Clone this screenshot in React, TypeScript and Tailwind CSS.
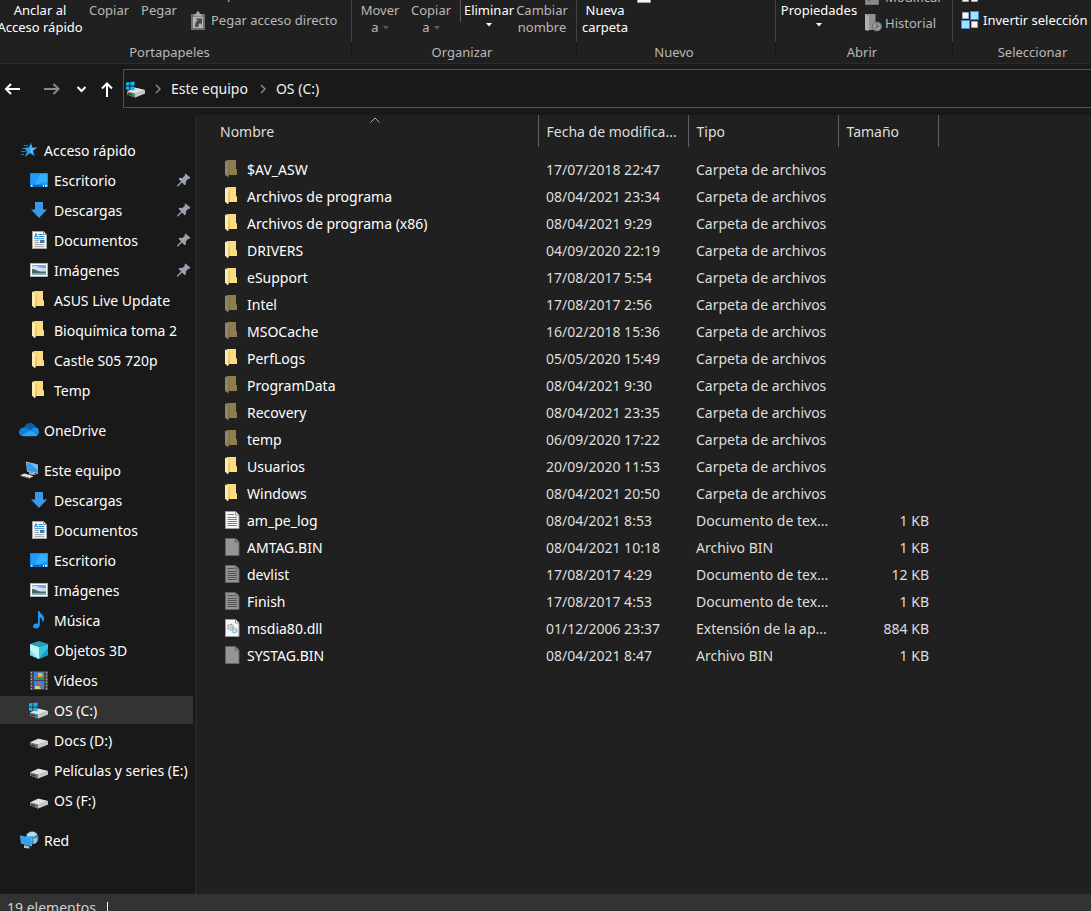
import type { ReactNode } from "react"
import clsx from "clsx"

/* ---------- icons ---------- */

function DriveShape() {
  return (
    <>
      <path d="M0 12.5 8 8.5 18 11v3.5L8 18.5 0 15.6z" fill="#8d8d8f" />
      <path d="M0 12.5 8.5 8.7 18 11 8 14.6z" fill="#e4e4e8" />
      <path d="M8 14.6 18 11v3.5L8 18.5z" fill="#c6c6ca" />
      <path d="M0 12.5 8 14.6v3.9L0 15.6z" fill="#77777a" />
      <path d="M1 14l5.5 1.5v1.8L1 15.4z" fill="#3b3b3d" />
      <path d="M5 15.3h2v1.5H5z" fill="#23b14d" />
    </>
  )
}

function DriveIcon() {
  return (
    <svg width="18" height="20" viewBox="0 0 18 20">
      <DriveShape />
    </svg>
  )
}

function SystemDriveIcon() {
  return (
    <svg width="20" height="20" viewBox="-1 0 20 20">
      <DriveShape />
      <path d="M-1 3.4 2.3 3v3.5H-1zM3.2 2.9 7.5 2.4v4.1H3.2zM-1 7.4h3.3v3.5l-3.3-.4zM3.2 7.4h4.3v4l-4.3-.5z" fill="#12b5ee" />
    </svg>
  )
}

function FolderIcon({ dim }: { dim?: boolean }) {
  return (
    <svg width="14" height="18" viewBox="0 0 14 18" className={clsx(dim && "opacity-50")}>
      <path d="M1.5 0H10.4q.6 0 .6.6V9.5h1V15H3z" fill="#f7d675" />
      <path d="M5 0h5.4q.6 0 .6.6V9.5h1V15H5z" fill="#fbdc7e" />
      <path d="M0 .4 3.8 2.6V15L3 17.2 0 14.8z" fill="#ffeab0" />
      <path d="M3.8 2.6 4.4 3.4V14l-1.4 3.2.2-2.5z" fill="#d9b45a" />
    </svg>
  )
}

type SheetKind = "text" | "blank" | "dll"

function SheetIcon({ kind, dim }: { kind: SheetKind; dim?: boolean }) {
  return (
    <svg width="15" height="18" viewBox="0 0 15 18" className={clsx(dim && "opacity-55")}>
      <path d="M.5.5h10l3.500 3.500v13.500H.5z" fill="#f6f6f6" stroke="#9a9a9a" />
      <path d="M10.500.5v3.500h3.500" fill="#fff" stroke="#8a8a8a" />
      {kind === "text" && (
        <path d="M2.500 3.500h6.500M2.500 6.500h9.500M2.500 8.500h9.500M2.500 10.500h9.500M2.500 12.500h9.500M2.500 14.500h9.500" stroke="#7d7d7d" />
      )}
      {kind === "dll" && (
        <>
          <circle cx="5.500" cy="8" r="2.600" fill="none" stroke="#7f8c95" strokeWidth="1.400" strokeDasharray="1.200 .6" />
          <circle cx="5.500" cy="8" r="1" fill="#9aa6ae" />
          <circle cx="9.500" cy="11.500" r="2.200" fill="#cfe5f4" stroke="#6ba3c9" strokeWidth="1.300" strokeDasharray="1.200 .6" />
        </>
      )}
    </svg>
  )
}

function StarIcon() {
  return (
    <svg width="18" height="16" viewBox="0 0 18 16">
      <path d="M11 .5 12.300 5.300l5.200.2-4.500 3.300 1.700 5.400-4.700-2.900-5.300 3.700 2.400-5.500L4 5.900l4.900-.6z" fill="#2b9fee" />
      <path d="M11 2.500 11.800 6.200l3.500.2-2.900 2.300.9 3.400-3-2z" fill="#5cc0ff" />
      <path d="M4 3.500h4M2 6.500h3M1 9.500h5M1 12.500h3" stroke="#1d7fd0" strokeWidth="1" />
    </svg>
  )
}

function DesktopIcon() {
  return (
    <svg width="18" height="14" viewBox="0 0 18 14">
      <path d="M0 0h18v14H0z" fill="#1183dc" />
      <path d="M.8.8h16.400v11H.8z" fill="#1a9cff" />
      <path d="M10 .8h7.200v7.500L5 11.800z" fill="#35adff" />
      <path d="M1 12h16v1.400H1z" fill="#0a5ea8" />
      <path d="M1 12h1.500v1.400H1zM13 12h1v1.400h-1zM15 12h2v1.400h-2z" fill="#fff" />
    </svg>
  )
}

function DownloadIcon() {
  return (
    <svg width="16" height="16" viewBox="0 0 16 16">
      <path d="M4 0h8v7.500h4L8 16 0 7.500h4z" fill="#3c97ea" />
    </svg>
  )
}

function DocumentIcon() {
  return (
    <svg width="15" height="18" viewBox="0 0 15 18">
      <path d="M.5.5h11l3 3v14H.5z" fill="#fafafa" stroke="#a5a5a5" />
      <path d="M11.500.5v3h3" fill="#ddd" stroke="#8a8a8a" />
      <path d="M2.500 6.500 4 2.500 5.500 6.500M3 5.200h2" stroke="#1f8bd6" fill="none" />
      <path d="M6.500 3.500h4M6.500 5.500h6M2.500 7.700h10" stroke="#1f8bd6" />
      <path d="M2.500 9.700h4.500M2.500 11.700h4.500M2.500 13.700h10M2.500 15.700h10" stroke="#9a9a9a" />
      <path d="M8 9h4.500v3H8z" fill="#3f79ad" />
    </svg>
  )
}

function PicturesIcon() {
  return (
    <svg width="18" height="14" viewBox="0 0 18 14">
      <path d="M.5.5h17v13H.5z" fill="#fff" stroke="#b4b4b4" />
      <path d="M2 2h14v10H2z" fill="#6fa8e8" />
      <path d="M2 3.500q3-1.500 6 .3 4 1.400 8 1.700V8H2z" fill="#cfe3f7" />
      <path d="M2 6q3 0 5.500 1.700T16 9.200v1.300H2z" fill="#3b6b52" />
      <path d="M2 10h14v2H2z" fill="#7ea7c2" />
    </svg>
  )
}

function MusicIcon() {
  return (
    <svg width="12" height="18" viewBox="0 0 12 18">
      <path d="M5 0h1.500c.4 2.600 4.600 4 4.600 7.600 0 1.600-.7 3-1.800 4.200.6-3-.6-4.700-2.500-5.300V14c0 2-1.700 3.400-3.800 3.400C1.200 17.400 0 16.500 0 15.200c0-1.900 2.300-3.200 5-2.600z" fill="#1a9cff" />
    </svg>
  )
}

function CubeIcon() {
  return (
    <svg width="18" height="18" viewBox="0 0 18 18">
      <path d="M9 0 18 3 9 6 0 3z" fill="#1fa3b5" />
      <path d="M0 3 9 6v12L0 14z" fill="#c0f4f7" />
      <path d="M0 9 9 18 0 14z" fill="#74dfe8" />
      <path d="M9 6 18 3v11L9 18z" fill="#35c3dc" />
      <path d="M9 18 18 7v7z" fill="#179cc6" />
    </svg>
  )
}

function VideoIcon() {
  return (
    <svg width="18" height="19" viewBox="0 0 18 19">
      <path d="M0 0h18v19H0z" fill="#454545" />
      <path d="M4 1h10v8H4zM4 10h10v8H4z" fill="#3f7fe0" />
      <path d="M1.500 1v18M16.500 1v18" stroke="#b0b0b0" strokeWidth="1.200" strokeDasharray="1.500 1.700" />
      <path d="M8 2h4l1 2-2 2H8z" fill="#f0b53a" />
      <path d="M5 5h3v2H5zM8 12h4v3H8z" fill="#d95140" />
      <path d="M7 7h6v2H7z" fill="#2b9348" />
      <path d="M5 15h4l2 3H5z" fill="#f1c94e" />
    </svg>
  )
}

function CloudIcon() {
  return (
    <svg width="20" height="14" viewBox="0 0 20 14">
      <path d="M5 5.200C5.800 2 8.200 0 11 0c2.700 0 4.900 1.700 5.700 4.300L11.500 8z" fill="#0a5fb4" />
      <path d="M4.500 4.600c1.500-.2 3 .2 4.200 1L13 8.500 2 12.600C.7 11.900 0 10.700 0 9.300 0 6.800 2 4.800 4.500 4.600z" fill="#1380d8" />
      <path d="M12 7.200c1-1.800 2.700-3 4.600-2.900C18.700 4.500 20 6.400 20 8.700c0 1-.3 2-.9 2.800z" fill="#1490df" />
      <path d="M2 12.600 12 7.300l7.100 4.200C18.500 12.500 17.500 13.200 16 13.200H4.500c-.9 0-1.800-.2-2.500-.6z" fill="#2aa5ec" />
    </svg>
  )
}

function ComputerIcon() {
  return (
    <svg width="19" height="18" viewBox="0 0 19 18">
      <path d="M6 .5 18 3.500v9.500L7 10.500z" fill="#b9c6cf" />
      <path d="M7 1.500 17.600 4v8L7.500 9.900z" fill="#2d9fee" />
      <path d="M10 2.200 17.600 4v5z" fill="#69c1fa" />
      <path d="M9 10.900l5 1.100 2 2-7-.5z" fill="#aab1b7" />
      <path d="M0 14.300 4.500 12.500l9 2.700-3.500 1.900z" fill="#e3e3e5" />
      <path d="M0 14.300 10 17.100v.7L0 15z" fill="#8a8a8d" />
    </svg>
  )
}

function NetworkIcon() {
  return (
    <svg width="19" height="18" viewBox="0 0 19 18">
      <circle cx="12" cy="6.800" r="6.500" fill="#3f8fb8" />
      <path d="M7 3.500Q12-1.500 17 3q-2 3-5 2.500T8 6z" fill="#b5ddec" />
      <path d="M13 8q3-2 5 0-1 4-4 5z" fill="#8cc5dc" />
      <path d="M0 4.500 12 7v8.500L1 12.500z" fill="#5bb6ef" />
      <path d="M.8 5.400 11.500 7.600v7L1.500 12z" fill="#2ea3f2" />
      <path d="M4 14l5 1.300 1 2.200-6-.6z" fill="#b9c0c5" />
    </svg>
  )
}

function PinIcon() {
  return (
    <svg width="14" height="14" viewBox="0 0 14 14" className="ml-auto shrink-0">
      <path d="M8.500.5 13.500 4.800l-1 1-1.200-.1-2.500 2.800.2 2.600-1.300 1.200L5 9.600 1 13.500H0l.3-1.200L4 8.600 1.500 5.800l1.200-1 2.700.2L8 2.400 7.600 1.300z" fill="#9aa3ad" />
    </svg>
  )
}

function PasteShortcutIcon() {
  return (
    <svg width="14" height="19" viewBox="0 0 14 19">
      <path d="M0 3h14v16H0z" fill="#6f6f6f" />
      <path d="M3 3h2l1-2.500h2L9 3h2v2.500H3z" fill="#a5a5a5" />
      <path d="M2 6h10v11H2z" fill="#b5b5b5" />
      <path d="M4.500 7.500H11V14L9 12q-2 1.500-1.500 4H4q-.5-4.500 2.500-6.500z" fill="#4a4a4a" />
    </svg>
  )
}

function HistoryIcon() {
  return (
    <svg width="17" height="18" viewBox="0 0 17 18">
      <path d="M0 0h10.500v8H12v8H0z" fill="#8f8f8f" />
      <path d="M0 0l4 2v14l-1 1-3-1z" fill="#adadad" />
      <circle cx="12" cy="12.500" r="4.500" fill="#9d9d9d" stroke="#686868" />
      <path d="M12 9v4l-2 1.500M12 13l2.200-1" stroke="#565656" fill="none" />
    </svg>
  )
}

function EditIcon() {
  return (
    <svg width="14" height="16" viewBox="0 0 14 16">
      <path d="M.5.5h13v15H.5z" fill="#8a8a8a" stroke="#777" />
      <path d="M3 13 4 10l7-8 1.500 1.500-7 8z" fill="#5c5c5c" />
    </svg>
  )
}

function SelectionIcon({ inverted }: { inverted?: boolean }) {
  return (
    <svg width="18" height="18" viewBox="0 0 18 18">
      <path d="M1.500 1.500h6v6h-6zM10.500 10.500h6v6h-6z" fill="#f5f5f5" stroke="#a9a9a9" />
      <path
        d={inverted ? "M9.500.5h8v8h-8zM.5 9.500h8v8h-8z" : "M10.500 1.500h6v6h-6zM1.500 10.500h6v6h-6z"}
        fill={inverted ? "#a9dcfb" : "#f5f5f5"}
        stroke={inverted ? "#2a90dc" : "#a9a9a9"}
      />
    </svg>
  )
}

function Arrow({ d, className }: { d: string; className?: string }) {
  return (
    <svg width="18" height="16" viewBox="0 0 18 16" fill="none" stroke="currentColor" strokeWidth="2" className={className}>
      <path d={d} />
    </svg>
  )
}

function Crumb() {
  return (
    <svg width="6" height="10" viewBox="0 0 6 10" fill="none" stroke="#8a8a8a" strokeWidth="1.500">
      <path d="M1 1l4 4-4 4" />
    </svg>
  )
}

function Caret() {
  return (
    <svg width="6" height="4" viewBox="0 0 6 4" className="inline-block">
      <path d="M0 0h6L3 3.500z" fill="currentColor" />
    </svg>
  )
}

/* ---------- data ---------- */

type NavItem = {
  label: string
  icon: ReactNode
  pinned?: boolean
  active?: boolean
}

type NavGroup = NavItem & { items: NavItem[] }

const navGroups: NavGroup[] = [
  {
    label: "Acceso rápido",
    icon: <StarIcon />,
    items: [
      { label: "Escritorio", icon: <DesktopIcon />, pinned: true },
      { label: "Descargas", icon: <DownloadIcon />, pinned: true },
      { label: "Documentos", icon: <DocumentIcon />, pinned: true },
      { label: "Imágenes", icon: <PicturesIcon />, pinned: true },
      { label: "ASUS Live Update", icon: <FolderIcon /> },
      { label: "Bioquímica toma 2", icon: <FolderIcon /> },
      { label: "Castle S05 720p", icon: <FolderIcon /> },
      { label: "Temp", icon: <FolderIcon /> },
    ],
  },
  { label: "OneDrive", icon: <CloudIcon />, items: [] },
  {
    label: "Este equipo",
    icon: <ComputerIcon />,
    items: [
      { label: "Descargas", icon: <DownloadIcon /> },
      { label: "Documentos", icon: <DocumentIcon /> },
      { label: "Escritorio", icon: <DesktopIcon /> },
      { label: "Imágenes", icon: <PicturesIcon /> },
      { label: "Música", icon: <MusicIcon /> },
      { label: "Objetos 3D", icon: <CubeIcon /> },
      { label: "Vídeos", icon: <VideoIcon /> },
      { label: "OS (C:)", icon: <SystemDriveIcon />, active: true },
      { label: "Docs (D:)", icon: <DriveIcon /> },
      { label: "Películas y series (E:)", icon: <DriveIcon /> },
      { label: "OS (F:)", icon: <DriveIcon /> },
    ],
  },
  { label: "Red", icon: <NetworkIcon />, items: [] },
]

type Entry = {
  name: string
  date: string
  type?: string
  size?: string
  sheet?: SheetKind
  hidden?: boolean
}

const entries: Entry[] = [
  { name: "$AV_ASW", date: "17/07/2018 22:47", hidden: true },
  { name: "Archivos de programa", date: "08/04/2021 23:34" },
  { name: "Archivos de programa (x86)", date: "08/04/2021 9:29" },
  { name: "DRIVERS", date: "04/09/2020 22:19" },
  { name: "eSupport", date: "17/08/2017 5:54" },
  { name: "Intel", date: "17/08/2017 2:56", hidden: true },
  { name: "MSOCache", date: "16/02/2018 15:36", hidden: true },
  { name: "PerfLogs", date: "05/05/2020 15:49" },
  { name: "ProgramData", date: "08/04/2021 9:30", hidden: true },
  { name: "Recovery", date: "08/04/2021 23:35", hidden: true },
  { name: "temp", date: "06/09/2020 17:22", hidden: true },
  { name: "Usuarios", date: "20/09/2020 11:53" },
  { name: "Windows", date: "08/04/2021 20:50" },
  { name: "am_pe_log", date: "08/04/2021 8:53", type: "Documento de tex...", size: "1 KB", sheet: "text" },
  { name: "AMTAG.BIN", date: "08/04/2021 10:18", type: "Archivo BIN", size: "1 KB", sheet: "blank", hidden: true },
  { name: "devlist", date: "17/08/2017 4:29", type: "Documento de tex...", size: "12 KB", sheet: "text", hidden: true },
  { name: "Finish", date: "17/08/2017 4:53", type: "Documento de tex...", size: "1 KB", sheet: "text", hidden: true },
  { name: "msdia80.dll", date: "01/12/2006 23:37", type: "Extensión de la ap...", size: "884 KB", sheet: "dll" },
  { name: "SYSTAG.BIN", date: "08/04/2021 8:47", type: "Archivo BIN", size: "1 KB", sheet: "blank", hidden: true },
]

/* ---------- ribbon ---------- */

function RibbonGroup({ label, className, children }: { label: string; className: string; children: ReactNode }) {
  return (
    <section className={clsx("flex shrink-0 flex-col", className)}>
      <div className="flex h-[42px] items-start border-r border-[#424242]">{children}</div>
      <h2 className="h-[18px] border-r border-[#171717] pr-1 text-center leading-5 text-[#b8b8b8]">{label}</h2>
    </section>
  )
}

function BigButton({ className, children }: { className: string; children: ReactNode }) {
  return (
    <button className={clsx("mt-0.5 flex shrink-0 flex-col items-center leading-[17px] whitespace-nowrap", className)}>
      {children}
    </button>
  )
}

function SmallButton({ icon, label, className }: { icon: ReactNode; label: string; className?: string }) {
  return (
    <button className={clsx("flex h-[26px] shrink-0 items-center whitespace-nowrap", className)}>
      {icon}
      {label}
    </button>
  )
}

function Ribbon() {
  return (
    <header className="flex h-16 shrink-0 overflow-hidden border-b border-[#2b2b2b] bg-[#202020] text-[13px]">
      <RibbonGroup label="Portapapeles" className="-ml-2 w-[360px]">
        <BigButton className="ml-1 w-[88px] text-white">
          <span>Anclar al</span>
          <span>Acceso rápido</span>
        </BigButton>
        <BigButton className="w-[50px] text-[#b8b8b8]">Copiar</BigButton>
        <BigButton className="w-[50px] text-[#b8b8b8]">Pegar</BigButton>
        <div className="ml-[7px] flex h-[33px] flex-col justify-end overflow-hidden text-[#b8b8b8]">
          <SmallButton icon={<span className="w-3.5" />} label="Copiar ruta de acceso" className="gap-1.5" />
          <SmallButton icon={<PasteShortcutIcon />} label="Pegar acceso directo" className="gap-1.5" />
        </div>
      </RibbonGroup>

      <RibbonGroup label="Organizar" className="w-[225px]">
        <BigButton className="w-14 text-[#b8b8b8]">
          <span>Mover</span>
          <span className="flex items-center gap-1">
            a <span className="flex text-[#5c5c5c]"><Caret /></span>
          </span>
        </BigButton>
        <BigButton className="w-[46px] text-[#b8b8b8]">
          <span>Copiar</span>
          <span className="flex items-center gap-1">
            a <span className="flex text-[#5c5c5c]"><Caret /></span>
          </span>
        </BigButton>
        <div className="ml-1.5 h-[22px] w-px bg-[#5a5a5a]" />
        <BigButton className="w-14 text-white">
          <span>Eliminar</span>
          <span className="mt-1 flex"><Caret /></span>
        </BigButton>
        <BigButton className="w-[50px] text-[#b8b8b8]">
          <span>Cambiar</span>
          <span>nombre</span>
        </BigButton>
      </RibbonGroup>

      <RibbonGroup label="Nuevo" className="w-[199px]">
        <BigButton className="w-14 text-white">
          <span>Nueva</span>
          <span>carpeta</span>
        </BigButton>
        <button aria-label="Nuevo elemento" className="ml-1 h-[3px] w-3.5 border-x border-b border-[#a0a0a0] bg-[#f5f5f5]" />
      </RibbonGroup>

      <RibbonGroup label="Abrir" className="w-[177px]">
        <BigButton className="w-[86px] text-white">
          <span>Propiedades</span>
          <span className="mt-1 flex"><Caret /></span>
        </BigButton>
        <div className="ml-[3px] flex h-9 flex-col justify-end overflow-hidden text-[#b8b8b8]">
          <SmallButton icon={<EditIcon />} label="Modificar" className="gap-1.5" />
          <SmallButton icon={<HistoryIcon />} label="Historial" className="gap-[3px]" />
        </div>
      </RibbonGroup>

      <RibbonGroup label="Seleccionar" className="w-[164px]">
        <div className="ml-2 flex h-[33px] flex-col justify-end overflow-hidden text-white">
          <SmallButton icon={<SelectionIcon />} label="No seleccionar nada" className="gap-1" />
          <SmallButton icon={<SelectionIcon inverted />} label="Invertir selección" className="gap-1" />
        </div>
      </RibbonGroup>
    </header>
  )
}

/* ---------- address bar ---------- */

function AddressBar() {
  return (
    <div className="flex h-[51px] shrink-0 items-start bg-[#191919] pt-[5px] pl-[3px]">
      <div className="flex h-[39px] w-[120px] shrink-0 items-center text-white">
        <button aria-label="Atrás">
          <Arrow d="M8 3 3 8l5 5M3 8h14" />
        </button>
        <button aria-label="Adelante" className="ml-[22px] text-[#8a8a8a]">
          <Arrow d="M10.500 3l5 5-5 5M15.500 8H1" />
        </button>
        <button aria-label="Ubicaciones recientes" className="ml-3">
          <Arrow d="M4.500 6 8.500 10l4-4" />
        </button>
        <button aria-label="Subir" className="ml-[7px]">
          <Arrow d="M4 7.500 9 2.500l5 5M9 2.500V16" />
        </button>
      </div>
      <nav aria-label="Ruta" className="flex h-[39px] min-w-0 grow items-center border-y border-l border-[#535353] pl-0.5 text-[#f0f0f0]">
        <SystemDriveIcon />
        <span className="ml-[9px]"><Crumb /></span>
        <button className="ml-2.5">Este equipo</button>
        <span className="ml-3"><Crumb /></span>
        <button className="ml-2.5">OS (C:)</button>
      </nav>
    </div>
  )
}

/* ---------- navigation pane ---------- */

function NavRow({ item, nested }: { item: NavItem; nested?: boolean }) {
  return (
    <a
      href="#"
      className={clsx(
        "flex h-7 items-center gap-[5px] pr-0.5 whitespace-nowrap text-white",
        nested ? "pl-[29px]" : "pl-[19px]",
        item.active && "bg-[#333333]"
      )}
    >
      <span className="flex w-5 shrink-0 justify-center">{item.icon}</span>
      <span className="pt-0.5">{item.label}</span>
      {item.pinned && <PinIcon />}
    </a>
  )
}

function Sidebar() {
  return (
    <aside className="flex w-[195px] shrink-0 flex-col gap-3 overflow-hidden bg-[#191919] pt-[21px] pr-0.5">
      {navGroups.map((group) => (
        <div key={group.label} className="flex flex-col gap-0.5">
          <NavRow item={group} />
          {group.items.map((item) => (
            <NavRow key={item.label} item={item} nested />
          ))}
        </div>
      ))}
    </aside>
  )
}

/* ---------- file list ---------- */

function FileList() {
  return (
    <main className="min-w-0 grow overflow-hidden border-l-2 border-[#262626] bg-[#202020] pl-[15px]">
      <table className="w-full table-fixed border-collapse text-left whitespace-nowrap text-[#dedede]">
        <colgroup>
          <col className="w-[326px]" />
          <col className="w-[150px]" />
          <col className="w-[150px]" />
          <col className="w-[100px]" />
          <col />
        </colgroup>
        <thead>
          <tr className="h-8">
            <th className="relative border-r border-[#5f5f5f] px-2 pt-0.5 pb-0 font-normal">
              <svg width="10" height="6" viewBox="0 0 10 6" className="absolute inset-x-0 top-0.5 mx-auto">
                <path d="M.5 5.500 5 1l4.500 4.500" fill="none" stroke="#b0b0b0" />
              </svg>
              Nombre
            </th>
            <th className="border-r border-[#5f5f5f] pt-0.5 pb-0 pl-2 font-normal">Fecha de modifica...</th>
            <th className="border-r border-[#5f5f5f] pt-0.5 pb-0 pl-2 font-normal">Tipo</th>
            <th className="border-r border-[#5f5f5f] pt-0.5 pb-0 pl-2 font-normal">Tamaño</th>
            <th />
          </tr>
        </thead>
        <tbody className="before:block before:h-2">
          {entries.map((entry) => (
            <tr key={entry.name} className="h-[27px]">
              <td className="p-0 pl-[13px]">
                <span className="flex items-center gap-[7px] text-white">
                  <span className="flex w-[15px] shrink-0">
                    {entry.sheet ? (
                      <SheetIcon kind={entry.sheet} dim={entry.hidden} />
                    ) : (
                      <FolderIcon dim={entry.hidden} />
                    )}
                  </span>
                  <span className="pt-0.5">{entry.name}</span>
                </span>
              </td>
              <td className="p-0 pt-0.5 pl-2">{entry.date}</td>
              <td className="p-0 pt-0.5 pl-2">{entry.type ?? "Carpeta de archivos"}</td>
              <td className="p-0 pt-0.5 pr-[9px] text-right">{entry.size}</td>
              <td />
            </tr>
          ))}
        </tbody>
      </table>
    </main>
  )
}

export default function App() {
  return (
    <div className="flex h-screen flex-col overflow-hidden bg-[#191919] font-['Noto_Sans','Open_Sans',sans-serif] text-[14px] leading-5">
      <Ribbon />
      <AddressBar />
      <div className="flex min-h-0 grow">
        <Sidebar />
        <FileList />
      </div>
      <footer className="flex h-[17px] shrink-0 items-start overflow-hidden bg-[#333333] pt-1 pl-[7px] text-[#d0d0d0]">
        <span>19 elementos</span>
        <span className="mt-1 ml-[11px] h-5 w-px shrink-0 bg-white" />
      </footer>
    </div>
  )
}
